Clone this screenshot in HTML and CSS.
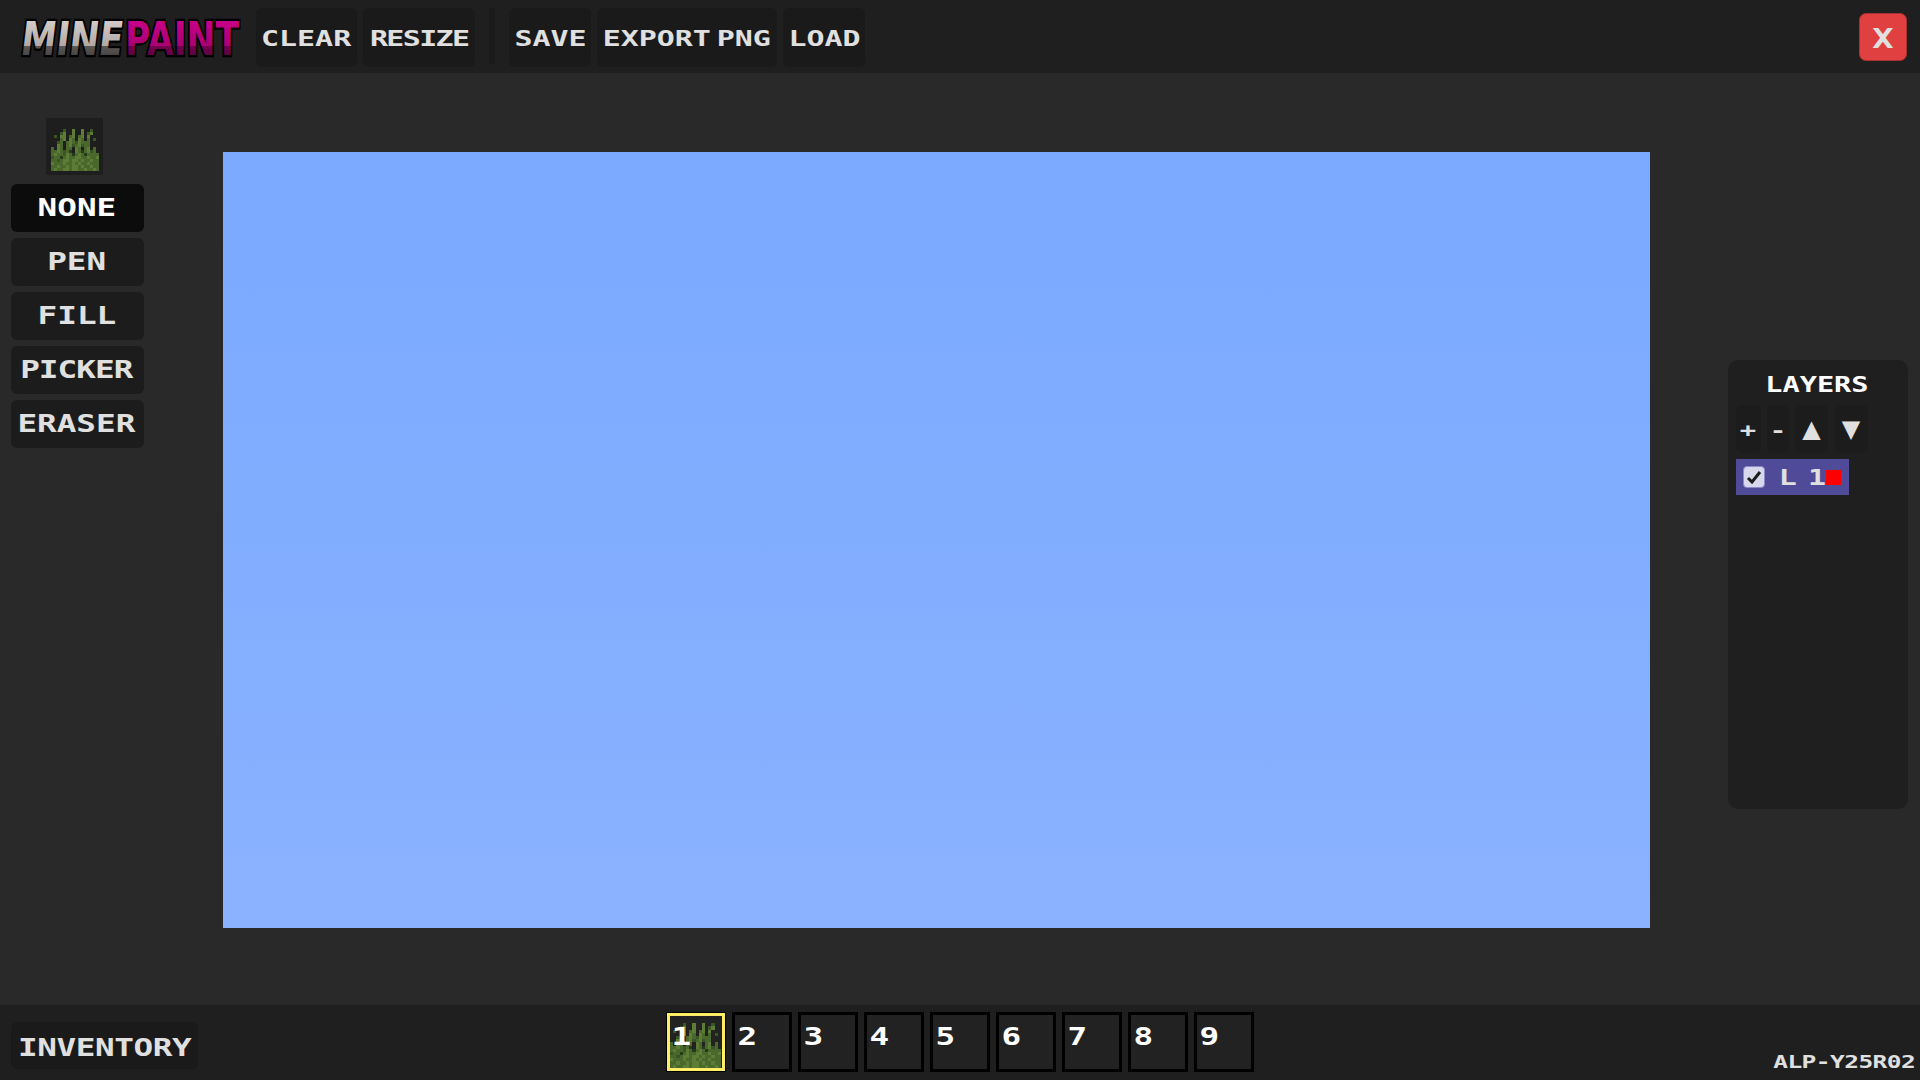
FILE: index.html
```html
<!DOCTYPE html>
<html lang="en">
<head>
    <meta charset="UTF-8">
    <meta name="viewport" content="width=device-width, initial-scale=1.0">
    <title>MinePaint</title>
    <link rel="stylesheet" href="styles.css">
</head>
<body>

    <!-- Grass sprite, reused in the tool preview and hotbar -->
    <svg class="sprites" width="0" height="0">
        <symbol id="grass" viewBox="0 0 16 14">
            <g fill="none" stroke-width="1" shape-rendering="crispEdges">
                <path stroke="#4a682b" d="M4 .5h1M7 .5h1M10 .5h1M13 .5h1M3 1.500h2M7 1.500h1M10 1.500h1M12 1.500h2M1 2.500h1M3 2.500h2M6 2.500h2M9 2.500h2M12 2.500h1M3 3.500h2M6 3.500h2M9 3.500h2M12 3.500h1M14 3.500h1M2 4.500h2M5 4.500h8M2 5.500h2M5 5.500h8M0 6.500h1M2 6.500h2M5 6.500h2M8 6.500h2M11 6.500h2M14 6.500h1M0 7.500h7M8 7.500h7M0 8.500h16M0 9.500h16M0 10.500h16M0 11.500h16M0 12.500h16M0 13.500h16"/>
                <path stroke="#5d7d36" d="M7 .5h1M10 .5h1M4 1.500h1M7 1.500h1M10 1.500h1M13 1.500h1M3 2.500h2M7 2.500h1M10 2.500h1M12 2.500h1M4 3.500h1M6 3.500h1M9 3.500h1M6 4.500h1M9 4.500h1M2 5.500h1M6 5.500h1M9 5.500h1M2 6.500h1M8 6.500h1M12 6.500h1M2 7.500h1M8 7.500h1M12 7.500h1M1 8.500h1M5 8.500h1M9 8.500h1M5 9.500h1M8 9.500h2M12 9.500h1M15 9.500h1M4 10.500h2M7 10.500h2M10 10.500h1M13 10.500h1M0 11.500h1M4 11.500h1M7 11.500h1M9 11.500h1M12 11.500h1M2 12.500h1M5 12.500h1M7 12.500h2M10 12.500h1M13 12.500h1M1 13.500h1M4 13.500h2M7 13.500h2M11 13.500h1M14 13.500h1"/>
                <path stroke="#3a5624" d="M4 .5h1M13 .5h1M3 1.500h1M12 1.500h1M1 2.500h1M14 3.500h1M2 4.500h1M8 4.500h1M7 5.500h1M10 5.500h1M4 7.500h1M13 7.500h1M4 8.500h1M0 9.500h1M2 10.500h1"/>
                <path stroke="#26391a" d="M6 7.500h1M10 7.500h1M7 8.500h1M11 8.500h1M3 9.500h1"/>
            </g>
        </symbol>
    </svg>

    <header class="topbar">
        <svg class="logo" width="226" height="40" viewBox="0 0 226 40" role="img" aria-label="MinePaint">
            <defs>
                <linearGradient id="logo-stone" gradientUnits="userSpaceOnUse" x1="0" y1="2" x2="0" y2="26">
                    <stop offset="0" stop-color="#d4ccc8"/>
                    <stop offset="0.72" stop-color="#b0a8a4"/>
                    <stop offset="0.72" stop-color="#5c5856"/>
                    <stop offset="1" stop-color="#454342"/>
                </linearGradient>
                <linearGradient id="logo-pink" gradientUnits="userSpaceOnUse" x1="0" y1="2" x2="0" y2="26">
                    <stop offset="0" stop-color="#c80088"/>
                    <stop offset="0.72" stop-color="#a80072"/>
                    <stop offset="0.72" stop-color="#74004f"/>
                    <stop offset="1" stop-color="#5c0040"/>
                </linearGradient>
            </defs>
            <g transform="scale(1 1.46)">
                <text class="logo-text" x="4" y="25.500" fill="url(#logo-stone)" textLength="102" lengthAdjust="spacingAndGlyphs" transform="skewX(-10) translate(4 0)">MINE</text>
                <text class="logo-text" x="109" y="25.500" fill="url(#logo-pink)" textLength="114" lengthAdjust="spacingAndGlyphs">PAINT</text>
            </g>
        </svg>
        <button class="btn w-clear"><span class="px">CLEAR</span></button>
        <button class="btn w-resize"><span class="px">RESIZE</span></button>
        <div class="divider"></div>
        <button class="btn w-save"><span class="px">SAVE</span></button>
        <button class="btn w-export"><span class="px">EXPORT PNG</span></button>
        <button class="btn w-load"><span class="px">LOAD</span></button>
        <button class="close-btn"><span class="px">X</span></button>
    </header>

    <main class="workspace">
        <aside class="tools">
            <div class="preview">
                <svg class="sprite" width="48" height="42"><use href="#grass"/></svg>
            </div>
            <button class="tool active"><span class="px">NONE</span></button>
            <button class="tool"><span class="px">PEN</span></button>
            <button class="tool"><span class="px">FILL</span></button>
            <button class="tool w-picker"><span class="px">PICKER</span></button>
            <button class="tool"><span class="px">ERASER</span></button>
        </aside>

        <div class="canvas"></div>

        <aside class="layers">
            <div class="layers-title"><span class="px">LAYERS</span></div>
            <div class="layer-controls">
                <button class="ctrl w-plus"><span class="px small">+</span></button>
                <button class="ctrl w-minus"><span class="px small">-</span></button>
                <button class="ctrl w-up">▲</button>
                <button class="ctrl w-down">▼</button>
            </div>
            <div class="layer-row">
                <span class="layer-check">
                    <svg width="16" height="14" viewBox="0 0 16 14"><path d="M2 8l4 4 8-10" fill="none" stroke="#1c1c1c" stroke-width="3"/></svg>
                </span>
                <span class="layer-name"><span class="px">L 1</span></span>
                <span class="layer-color"></span>
            </div>
        </aside>
    </main>

    <footer class="bottombar">
        <button class="btn inventory"><span class="px">INVENTORY</span></button>
        <div class="hotbar">
            <div class="slot selected"><svg class="sprite slot-item" width="51" height="45"><use href="#grass"/></svg><span class="slot-num"><span class="px">1</span></span></div>
            <div class="slot"><span class="slot-num"><span class="px">2</span></span></div>
            <div class="slot"><span class="slot-num"><span class="px">3</span></span></div>
            <div class="slot"><span class="slot-num"><span class="px">4</span></span></div>
            <div class="slot"><span class="slot-num"><span class="px">5</span></span></div>
            <div class="slot"><span class="slot-num"><span class="px">6</span></span></div>
            <div class="slot"><span class="slot-num"><span class="px">7</span></span></div>
            <div class="slot"><span class="slot-num"><span class="px">8</span></span></div>
            <div class="slot"><span class="slot-num"><span class="px">9</span></span></div>
        </div>
        <div class="version"><span class="px">ALP-Y25R02</span></div>
    </footer>

</body>
</html>
```

FILE: styles.css
```css
* {
    box-sizing: border-box;
}

body {
    margin: 0;
    width: 1920px;
    height: 1080px;
    overflow: hidden;
    display: flex;
    flex-direction: column;
    background: #292929;
    color: #e0e0e0;
    font-family: 'DejaVu Sans Mono', monospace;
    font-weight: bold;
}

button {
    font: inherit;
    color: inherit;
    border: none;
    padding: 0;
    cursor: pointer;
}

/* Stretched mono text, stands in for the blocky game font */
.px {
    display: inline-block;
    transform: scaleX(1.36);
    white-space: pre;
}

.sprites {
    position: absolute;
}

.sprite {
    display: block;
}

/* Top bar */
.topbar {
    height: 73px;
    flex-shrink: 0;
    display: flex;
    align-items: flex-start;
    gap: 6px;
    padding: 8px 13px 0 16px;
    background: #1f1f1f;
}

.logo {
    margin: 10px 8px 0 0;
    flex-shrink: 0;
}

.logo-text {
    font-family: 'DejaVu Sans', sans-serif;
    font-weight: bold;
    font-size: 32px;
    stroke: #000;
    stroke-width: 3px;
    paint-order: stroke;
}

.btn {
    height: 59px;
    display: flex;
    align-items: center;
    justify-content: center;
    padding-top: 2px;
    background: #1a1a1a;
    border-radius: 6px;
    font-size: 22px;
}

.w-clear { width: 101px; }
.w-resize { width: 112px; }
.w-resize .px { letter-spacing: -1.2px; }
.w-save { width: 82px; }
.w-export { width: 180px; word-spacing: -9px; }
.w-load { width: 82px; }

.divider {
    width: 6px;
    height: 56px;
    margin: 0 8px;
    background: #1a1a1a;
}

.close-btn {
    margin: 5px 0 0 auto;
    width: 48px;
    height: 48px;
    padding-top: 4px;
    background: #e04040;
    border: 1px solid #a83232;
    border-radius: 7px;
    font-size: 26px;
}

/* Middle */
.workspace {
    flex: 1;
    display: grid;
    grid-template-columns: 223px 1427px 1fr;
    align-items: start;
}

.tools {
    padding: 45px 0 0 11px;
    width: 144px;
    display: flex;
    flex-direction: column;
    gap: 6px;
}

.preview {
    width: 57px;
    height: 57px;
    margin: 0 0 3px 35px;
    padding: 11px 0 0 5px;
    background: #1e1e1e;
}

.tool {
    height: 48px;
    padding-right: 2px;
    background: #1c1c1c;
    border-radius: 6px;
    font-size: 24px;
}

.tool.active {
    background: #0c0c0c;
    color: #fff;
}

.w-picker .px { letter-spacing: -0.7px; }

.canvas {
    height: 776px;
    margin-top: 79px;
    background: linear-gradient(to bottom, #7aa9ff, #8ab2ff);
}

.layers {
    width: 180px;
    height: 449px;
    margin: 287px 0 0 78px;
    padding: 13px 8px;
    background: #1f1f1f;
    border-radius: 10px;
}

.layers-title {
    height: 32px;
    padding-right: 2px;
    text-align: center;
    font-size: 21px;
    line-height: 24px;
    color: #fff;
}

.layer-controls {
    display: flex;
    gap: 6px;
    height: 48px;
}

.ctrl {
    height: 48px;
    background: #1c1c1c;
    border-radius: 6px;
    font-family: 'DejaVu Sans', sans-serif;
    font-size: 24px;
    font-weight: normal;
}

.px.small {
    font-family: 'DejaVu Sans Mono', monospace;
    font-weight: bold;
    font-size: 20px;
}

.w-plus { width: 25px; }
.w-minus { width: 22px; }
.w-up { width: 33px; }
.w-down { width: 34px; }

.layer-row {
    width: 113px;
    height: 36px;
    margin-top: 6px;
    display: flex;
    align-items: center;
    padding-left: 7px;
    background: #4f4b98;
    font-size: 22px;
}

.layer-check {
    width: 22px;
    height: 22px;
    display: flex;
    align-items: center;
    justify-content: center;
    background: #d8d8ec;
    border: 1px solid #8a8ac8;
    border-radius: 4px;
}

.layer-name {
    width: 62px;
    padding: 2px 0 0 20px;
    line-height: 22px;
    word-spacing: -5px;
}

.layer-color {
    width: 15px;
    height: 15px;
    margin-left: -1px;
    background: #f00;
}

/* Bottom bar */
.bottombar {
    height: 75px;
    flex-shrink: 0;
    display: grid;
    grid-template-columns: 1fr auto 1fr;
    padding: 7px 7px 0;
    background: #1f1f1f;
}

.inventory {
    width: 187px;
    height: 47px;
    margin: 10px 0 0 4px;
    padding-top: 4px;
    font-size: 24px;
}

.inventory .px { letter-spacing: -0.3px; }

.hotbar {
    display: flex;
    gap: 6px;
}

.slot {
    position: relative;
    width: 60px;
    height: 60px;
    border: 3px solid #000;
    background: #222;
}

.slot.selected {
    border: 1px solid #000;
    box-shadow: inset 0 0 0 3px #ffee66;
}

.slot-item {
    position: absolute;
    left: 3px;
    bottom: 3px;
}

.slot-num {
    position: absolute;
    left: 5px;
    top: 8px;
    font-size: 24px;
    line-height: 28px;
    color: #fff;
}

.selected .slot-num {
    left: 7px;
    top: 10px;
}

.version {
    justify-self: end;
    align-self: end;
    margin-right: 17px;
    padding-bottom: 7px;
    font-size: 18px;
    line-height: 22px;
}

.version .px { letter-spacing: -0.4px; }
```
